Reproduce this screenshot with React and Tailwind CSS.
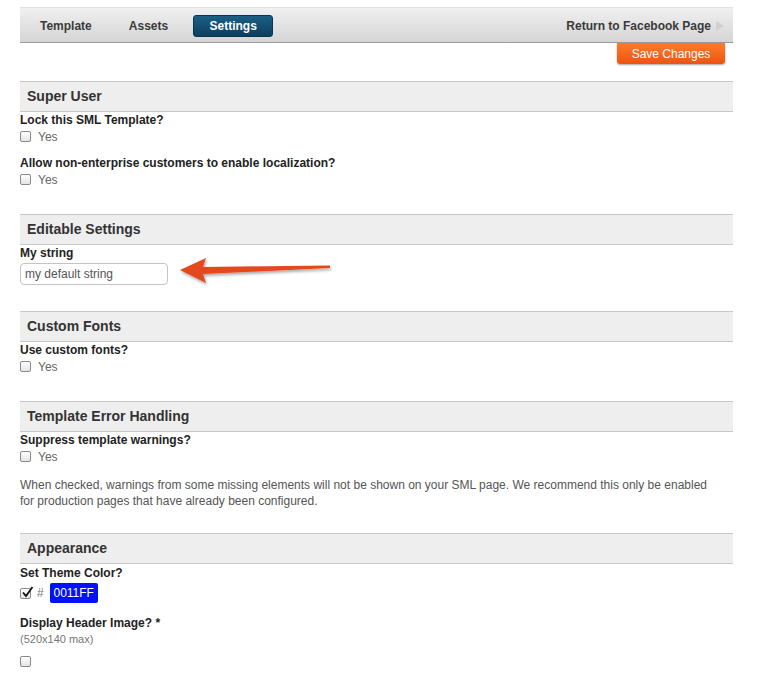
import React from 'react';

const font = { fontFamily: '"Liberation Sans", Arial, sans-serif' };

function Box({ checked }) {
  return (
    <span className="relative inline-block w-[11px] h-[11px] rounded-[2px] border border-[#8a8a8a] bg-gradient-to-b from-white to-[#e4e4e4] shrink-0">
      {checked && (
        <svg className="absolute left-[0px] top-[-3px]" width="13" height="13" viewBox="0 0 13 13">
          <path d="M2 6.5 L5 10 L11.5 1" fill="none" stroke="#111" strokeWidth="1.8" />
        </svg>
      )}
    </span>
  );
}

function Section({ title, className = 'mt-[26px]', children }) {
  return (
    <div className={className}>
      <div className="h-[31px] bg-[#eeeeee] border-t border-b border-[#c8c8c8] flex items-center pl-[7px]">
        <span className="text-[14px] font-bold text-[#333]">{title}</span>
      </div>
      <div className="flex flex-col gap-[10px]">{children}</div>
    </div>
  );
}

function Field({ label, className = '', children }) {
  return (
    <div className={className}>
      <div className="text-[12px] font-bold text-[#222] leading-[16px]">{label}</div>
      {children}
    </div>
  );
}

function YesRow() {
  return (
    <div className="flex items-center gap-[7px] h-[17px]">
      <Box />
      <span className="text-[12px] text-[#666]">Yes</span>
    </div>
  );
}

export default function App() {
  return (
    <div className="w-[765px] h-[678px] bg-white overflow-hidden" style={font}>
      <div className="ml-[20px] w-[713px] pt-[7px] relative">
        {/* tabs */}
        <div className="h-[36px] bg-gradient-to-b from-[#f0f0f0] to-[#d5d5d5] border-t border-[#e2e2e2] border-b border-b-[#9c9c9c] flex items-center pt-[1px] pl-[20px] pr-[9px]">
          <span className="text-[12px] font-bold text-[#3a3a3a]">Template</span>
          <span className="text-[12px] font-bold text-[#3a3a3a] ml-[37px]">Assets</span>
          <span className="ml-[25px] w-[80px] h-[22px] rounded-[3px] bg-gradient-to-b from-[#1b5f85] to-[#0b3f60] border border-[#0a3552] flex items-center justify-center text-[12px] font-bold text-white">Settings</span>
          <span className="ml-auto text-[12px] font-bold text-[#3a3a3a]">Return to Facebook Page</span>
          <svg className="ml-[5px]" width="8" height="10" viewBox="0 0 8 10">
            <path d="M0 0 L8 5 L0 10 Z" fill="#d0d0d0" />
          </svg>
        </div>
        <div className="flex justify-end pr-[8px]">
          <span className="w-[108px] h-[21px] rounded-b-[3px] bg-gradient-to-b from-[#ff7b2b] to-[#ec5410] shadow-[0_1px_2px_rgba(0,0,0,0.35)] flex items-center justify-center text-[12px] text-white">Save Changes</span>
        </div>

        <div className="mt-[-9px]">
          <Section title="Super User">
            <Field label="Lock this SML Template?"><YesRow /></Field>
            <Field label="Allow non-enterprise customers to enable localization?"><YesRow /></Field>
          </Section>

          <Section title="Editable Settings">
            <Field label="My string">
              <div className="mt-[2px] w-[148px] h-[22px] border border-[#c4c4c4] rounded-[4px] flex items-center pl-[4px] text-[12px] text-[#555]">my default string</div>
            </Field>
          </Section>

          <Section title="Custom Fonts">
            <Field label="Use custom fonts?"><YesRow /></Field>
          </Section>

          <Section title="Template Error Handling">
            <Field label="Suppress template warnings?"><YesRow /></Field>
            <p className="text-[12px] leading-[16px] text-[#555] pr-[20px] mt-[2px]">
              When checked, warnings from some missing elements will not be shown on your SML page. We recommend this only be enabled for production pages that have already been configured.
            </p>
          </Section>

          <Section title="Appearance" className="mt-[24px]">
            <Field label="Set Theme Color?" className="pt-[1px]">
              <div className="flex items-center gap-[6px] mt-[2px]">
                <Box checked />
                <span className="text-[12px] text-[#777]">#</span>
                <span className="w-[48px] h-[20px] rounded-[2px] bg-[#0011ff] text-white text-[12px] flex items-center justify-center">0011FF</span>
              </div>
            </Field>
            <Field label="Display Header Image? *" className="mt-[2px]">
              <div className="text-[11px] text-[#777] leading-[15px] mt-[1px]">(520x140 max)</div>
              <div className="mt-[9px] flex"><Box /></div>
            </Field>
          </Section>
        </div>

        {/* annotation arrow */}
        <svg className="absolute left-[158px] top-[250px]" width="160" height="40" viewBox="0 0 160 40">
          <defs>
            <filter id="sh" x="-10%" y="-30%" width="120%" height="170%">
              <feDropShadow dx="1" dy="2" stdDeviation="1.5" floodColor="#000" floodOpacity="0.35" />
            </filter>
          </defs>
          <path d="M2 20 L28 8 L25 17 L152 15.5 L152 18 L25 24 L28 33 Z" fill="#e2481a" filter="url(#sh)" />
        </svg>
      </div>
    </div>
  );
}
